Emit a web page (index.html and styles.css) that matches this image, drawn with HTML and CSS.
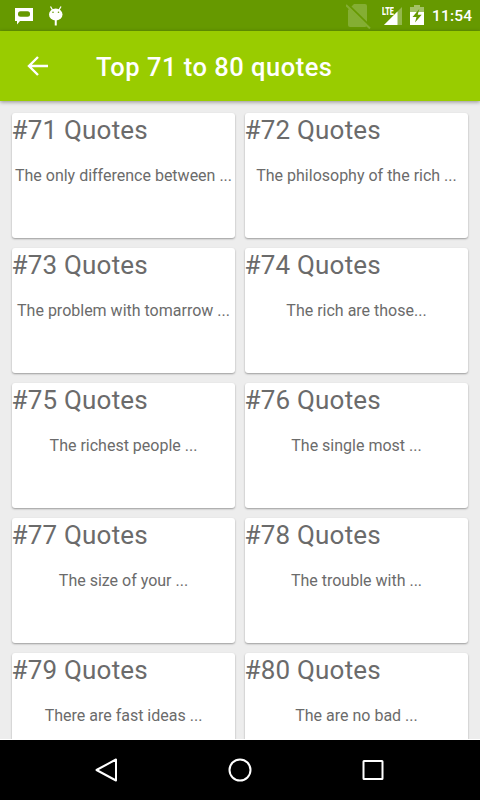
FILE: index.html
```html
<!DOCTYPE html>
<html lang="en">
<head>
  <meta charset="UTF-8">
  <title>Top 71 to 80 quotes</title>
  <link rel="stylesheet" href="styles.css">
</head>
<body>

<div class="status-bar">
  <svg class="icon-message" width="18" height="17" viewBox="0 0 18 17">
    <path d="M0 0H18V13H5L2 16.500V13H0Z" fill="#fff"/>
    <rect x="3" y="3.300" width="12" height="5.400" rx="2.500" fill="#669900"/>
  </svg>
  <svg class="icon-debug" width="16" height="20" viewBox="0 0 16 20">
    <path d="M2.500 .5L4.500 4M13 .5L11 4" stroke="#fff" stroke-width="1.300"/>
    <path d="M7.750 13V19.500" stroke="#fff" stroke-width="2"/>
    <ellipse cx="7.750" cy="8.500" rx="6.750" ry="6" fill="#fff"/>
    <circle cx="5" cy="6.300" r=".8" fill="#669900"/>
    <circle cx="10.500" cy="6.300" r=".8" fill="#669900"/>
  </svg>
  <svg class="icon-sim" width="26" height="26" viewBox="0 0 26 26">
    <path d="M8 1H19Q21 1 21 3V22Q21 24 19 24H4Q2 24 2 22V7Z" fill="#84ae33"/>
    <path d="M2 1.500L24 23" stroke="#669900" stroke-width="1.800"/>
    <path d="M0 2L24 25.500" stroke="#84ae33" stroke-width="2"/>
  </svg>
  <div class="signal">
    <svg width="20" height="19" viewBox="0 0 20 19">
      <path d="M20 0V18H2Z" fill="#94b84d"/>
      <path d="M15.500 4.500V18H2Z" fill="#fff"/>
    </svg>
    <span class="lte">LTE</span>
  </div>
  <svg class="icon-battery" width="14" height="20" viewBox="0 0 14 20">
    <path d="M4 0H10V2H14V8H0V2H4Z" fill="#a3c266"/>
    <path d="M0 7H14V20H0Z" fill="#fff"/>
    <path d="M9.300 4L2.500 12H6.500L5 17.500L11.700 9.700H7.700Z" fill="#669900"/>
  </svg>
  <span class="clock">11:54</span>
</div>

<header class="toolbar">
  <svg class="back" width="22" height="20" viewBox="0 0 22 20">
    <path d="M21 10H2M11 1L2 10L11 19" fill="none" stroke="#fff" stroke-width="2.400"/>
  </svg>
  <h1>Top 71 to 80 quotes</h1>
</header>

<main class="quotes">
  <div class="card"><h2>#71 Quotes</h2><p>The only difference between ...</p></div>
  <div class="card"><h2>#72 Quotes</h2><p>The philosophy of the rich ...</p></div>
  <div class="card"><h2>#73 Quotes</h2><p>The problem with tomarrow ...</p></div>
  <div class="card"><h2>#74 Quotes</h2><p>The rich are those...</p></div>
  <div class="card"><h2>#75 Quotes</h2><p>The richest people ...</p></div>
  <div class="card"><h2>#76 Quotes</h2><p>The single most ...</p></div>
  <div class="card"><h2>#77 Quotes</h2><p>The size of your ...</p></div>
  <div class="card"><h2>#78 Quotes</h2><p>The trouble with ...</p></div>
  <div class="card"><h2>#79 Quotes</h2><p>There are fast ideas ...</p></div>
  <div class="card"><h2>#80 Quotes</h2><p>The are no bad ...</p></div>
</main>

<nav class="nav-bar">
  <svg width="24" height="26" viewBox="0 0 24 26">
    <path d="M2.500 13L22 2.500V23.500Z" fill="none" stroke="#fff" stroke-width="2" stroke-linejoin="round"/>
  </svg>
  <svg width="24" height="24" viewBox="0 0 24 24">
    <circle cx="12" cy="12" r="10.500" fill="none" stroke="#fff" stroke-width="2"/>
  </svg>
  <svg width="22" height="20" viewBox="0 0 22 20">
    <rect x="1.500" y="1" width="19" height="18" rx=".5" fill="none" stroke="#fff" stroke-width="2"/>
  </svg>
</nav>

</body>
</html>
```
FILE: styles.css
```css
* { box-sizing: border-box; }
body { margin: 0; width: 480px; height: 800px; display: flex; flex-direction: column; overflow: hidden; background: #ededed; font-family: Roboto, sans-serif; }
h1, h2, p { margin: 0; font-weight: 400; white-space: nowrap; }
svg { display: block; flex: none; }

.status-bar { flex: none; display: flex; height: 31px; padding-left: 15px; background: #669900; color: #fff; }
.icon-message { margin-top: 8px; }
.icon-debug { margin: 6px 0 0 15px; }
.icon-sim { margin: 3px 0 0 282px; }
.signal { position: relative; margin: 7px 0 0 10px; }
.lte { position: absolute; left: 0; top: -1px; font-size: 11px; line-height: 11px; font-weight: 900; transform: scaleX(.66); transform-origin: 0 0; }
.icon-battery { margin: 5px 0 0 8px; }
.clock { margin-left: 8px; font-size: 15.5px; line-height: 33px; font-weight: 500; letter-spacing: .2px; }

.toolbar { flex: none; display: flex; align-items: center; height: 70px; padding-left: 27px; background: #99cc00; color: #fff; box-shadow: 0 1px 4px rgba(0,0,0,0.4); z-index: 1; }
.toolbar h1 { margin: 2px 0 0 47px; font-size: 25.5px; font-weight: 500; letter-spacing: .5px; }

.quotes { flex: 1; min-height: 0; overflow: hidden; display: grid; grid-template-columns: 223px 223px; grid-auto-rows: 125px; gap: 10px; padding: 11.5px 12px 0; border-bottom: 1px solid #fff; align-content: start; }
.card { background: #fff; border-radius: 3px; box-shadow: 0 1px 2px rgba(0,0,0,0.35); color: #6b6b6b; }
.card h2 { margin-left: -.5px; font-size: 26px; line-height: 34px; letter-spacing: .2px; }
.card p { margin-top: 19px; font-size: 16px; line-height: 19px; text-align: center; }

.nav-bar { flex: none; display: flex; justify-content: space-between; align-items: center; height: 60px; padding: 0 96px 0 94px; background: #000; }
```
